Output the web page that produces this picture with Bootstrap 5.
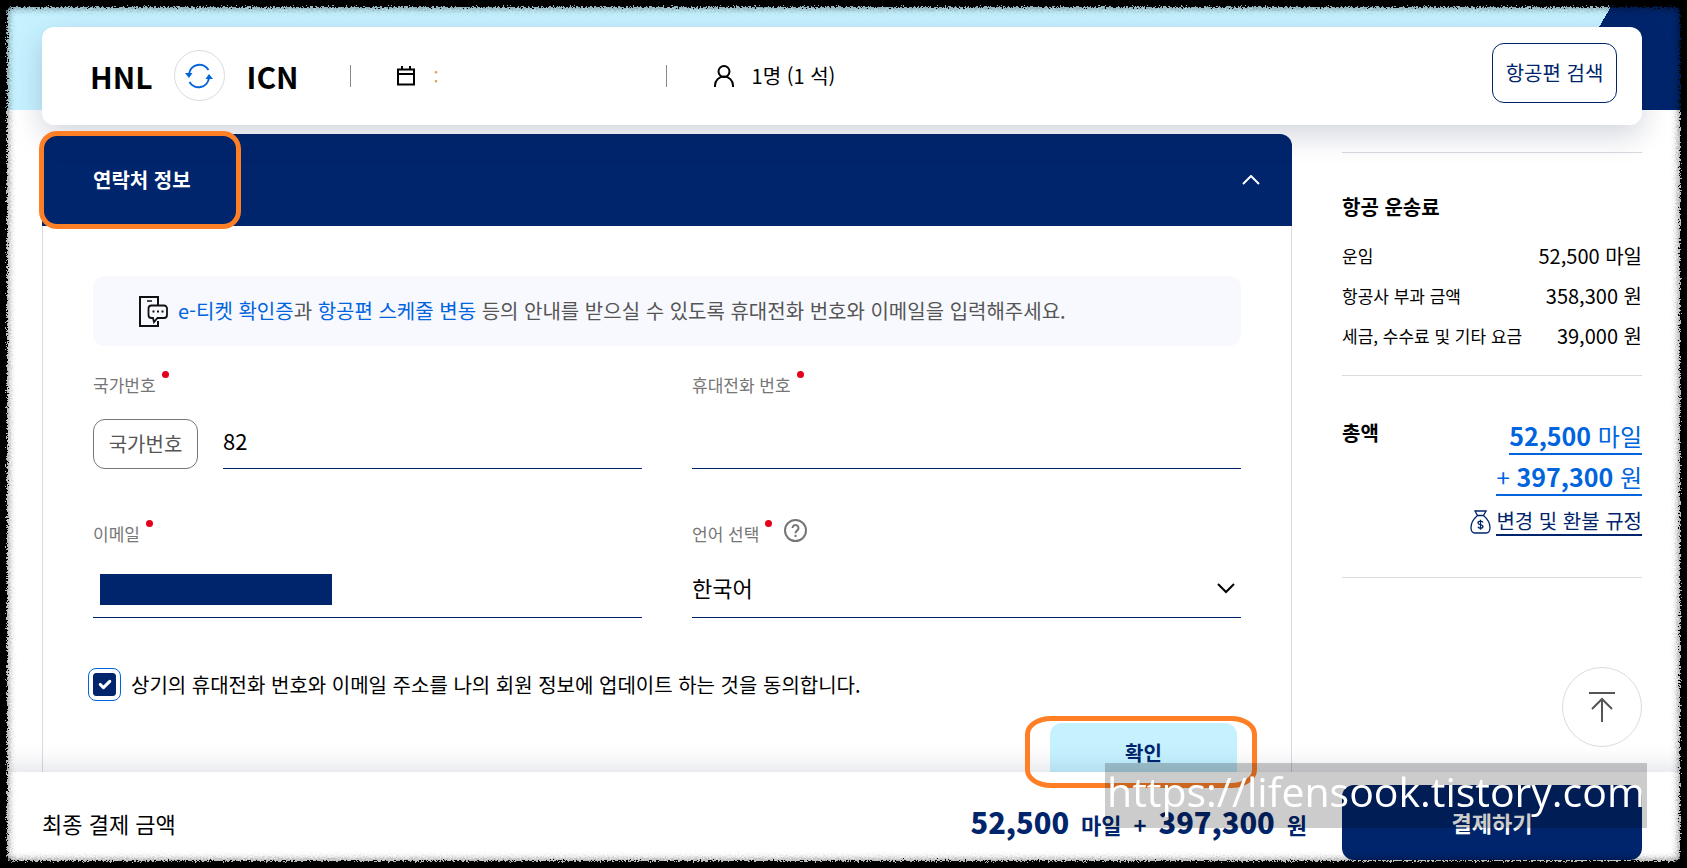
<!DOCTYPE html>
<html lang="ko">
<head>
<meta charset="utf-8">
<meta name="viewport" content="width=device-width, initial-scale=1">
<title>연락처 정보</title>
<link href="https://cdn.jsdelivr.net/npm/bootstrap@5.3.0/dist/css/bootstrap.min.css" rel="stylesheet">
<style>
:root{--navy:#00256c;--blue:#0064de;--sky:#c6f2ff;--line:#d9dbe1;--mark-orange:#ff7f27}
body{font-family:"Noto Sans CJK KR",sans-serif;font-size:20px;line-height:30px;color:#000;background:#fff}
svg{display:block;flex:none}
.side-pad{padding-left:42px;padding-right:45px}
.hero{padding-top:27px;padding-bottom:9px;z-index:1;
  background:linear-gradient(120deg,transparent 50%,var(--navy) 50%) right top/208px 110px no-repeat,linear-gradient(var(--sky),var(--sky)) 0 0/100% 110px no-repeat}
.trip{height:98px;border-radius:12px;padding:0 25px 1px 48px;box-shadow:0 10px 30px rgba(0,20,70,.18)}
.airport{font-size:30px;font-weight:700}
.swap{width:51px;height:51px;border:1px solid var(--line);border-radius:50%;background:#fff;color:var(--blue);margin:0 22px 0 21px}
.vbar{width:1px;height:22px;background:#8a8a8a}
.airport + .vbar{margin-left:51px}
.trip-date{width:315px;padding-left:45px;gap:18px}
.trip-pax{padding-left:47px;gap:18px}
.date-rest{color:#e0a050;font-size:18px}
.btn-search{height:60px;width:125px;border:1px solid var(--navy);border-radius:12px;color:var(--navy);font-size:20px;margin-bottom:5px}
.content{gap:50px;min-height:0}
.panel-head{height:92px;flex:none;border-radius:12px 12px 0 0;background:var(--navy);color:#fff;padding:0 32px 0 51px}
.panel-head h2,.fare h2{font-size:20px;line-height:30px;font-weight:700}
.panel-body{border:solid var(--line);border-width:0 1px;padding:50px 50px 0}
.ring{position:absolute;border:5px solid var(--mark-orange);pointer-events:none;z-index:3}
.ring-title{left:-3px;top:-3px;width:202px;height:98px;border-radius:18px}
.ring-ok{left:-25px;right:-20px;top:-7px;height:72px;border-radius:26px/18px}
.notice{height:70px;border-radius:12px;background:#f8f9fe;color:#555;padding-left:46px;gap:10px}
.notice a{color:var(--blue);text-decoration:none}
.fields{--bs-gutter-x:50px;row-gap:50px;margin-top:24px}
.label-row{font-size:17px;line-height:30px;color:#767676;height:30px;margin-bottom:19px}
.req::after{content:"";display:inline-block;width:7px;height:7px;border-radius:50%;background:#e4001b;margin-left:6px;vertical-align:14px}
.line-ctl{height:50px;width:100%;border:0;border-bottom:1px solid var(--navy);border-radius:0;background:none;padding:0 0 7px;font-size:22px;color:#000;appearance:none;outline-offset:4px}
select.line-ctl{padding-bottom:12px}
.code-row{gap:25px}
.btn-code{width:105px;height:50px;flex:none;border:1px solid #767676;border-radius:12px;color:#555;font-size:20px;padding:0}
.redact{position:absolute;left:7px;top:6px;width:232px;height:31px;background:var(--navy)}
.caret{position:absolute;right:6px;top:14px;pointer-events:none}
.agree{height:33px;margin-top:50px;gap:15px}
.agree .form-check-input{width:23px;height:23px;margin:0;border-radius:3px;background-color:var(--navy);border-color:var(--navy);outline:1px solid var(--blue);outline-offset:4px;box-shadow:none}
.ok-wrap{width:187px;margin:22px 4px 0 auto}
.btn-ok{height:60px;border-radius:12px;background:var(--sky);color:var(--navy);font-weight:700;font-size:20px}
.fare{width:300px;flex:none;padding-top:18px}
.fare hr{margin:0;border-top:1px solid var(--line);opacity:1}
.fare .fare-title{margin:39px 0 14px}
.fare table{width:100%;margin-bottom:19px}
.fare th{font-size:17px;font-weight:400;padding:0;height:40px}
.fare td{padding:0;text-align:right}
.total{padding:42px 0 41px}
.sum{color:var(--blue);font-size:24px;line-height:34px;border-bottom:2px solid var(--blue);text-decoration:none;margin-bottom:4px}
.sum b{font-size:25px}
.rule-link{color:var(--navy);text-decoration:none;gap:5px;margin-top:8px}
.rule-link span{border-bottom:2px solid var(--navy);line-height:26px}
.paybar{z-index:2;padding-top:13px;padding-bottom:8px;height:96px;box-shadow:0 -4px 24px rgba(0,30,70,.14);gap:35px}
.pay-label{font-size:22px}
.pay-total{color:var(--navy);font-size:22px;font-weight:700;gap:12px}
.pay-total b{font-size:29px}
.btn-pay{width:300px;height:75px;border-radius:12px;background:var(--navy);color:#fff;font-weight:700;font-size:22px}
.to-top{position:fixed;right:45px;bottom:121px;width:80px;height:80px;border:1px solid var(--line);border-radius:50%;background:#fff;color:#555;z-index:2}
.stamp{position:fixed;right:40px;bottom:40px;width:542px;height:65px;background:rgba(0,0,0,.2);color:#fff;font:41px/56px "Open Sans",sans-serif;text-align:center;white-space:nowrap;z-index:4;pointer-events:none}
.edge{position:fixed;inset:-20px;border:27px solid #000;pointer-events:none;z-index:5;filter:url(#rough)}
.edge i{position:absolute;inset:-6px;border:6px solid #000;border-radius:12px;box-shadow:inset 0 0 7px 1px rgba(0,0,0,.5)}
</style>
</head>
<body class="vh-100 d-flex flex-column">

<header class="hero side-pad position-relative">
  <div class="trip bg-white d-flex align-items-center">
    <span class="airport">HNL</span>
    <button class="swap btn p-0 d-flex align-items-center justify-content-center" type="button" aria-label="출발지 도착지 교환">
      <svg width="28" height="28" viewBox="0 0 28 28" fill="none" stroke="currentColor" stroke-width="2"><path d="M4 12A10.500 10.500 0 0 1 23.500 8M24 16A10.500 10.500 0 0 1 4.500 20"/><path d="M0 11h7.500L4 16zM20.500 17H28l-4-5z" fill="currentColor" stroke="none"/></svg>
    </button>
    <span class="airport">ICN</span>
    <span class="vbar"></span>
    <div class="trip-date d-flex align-items-center">
      <svg width="20" height="20" viewBox="0 0 20 20" fill="none" stroke="#000" stroke-width="2"><path d="M2 3.500h16v15H2zM2 8h16M6 0v4M14 0v4"/></svg>
      <span class="date-rest">:</span>
    </div>
    <span class="vbar"></span>
    <div class="trip-pax d-flex align-items-center">
      <svg width="20" height="22" viewBox="0 0 20 22" fill="none" stroke="#000" stroke-width="2"><circle cx="10" cy="6.500" r="5.500"/><path d="M1 22v-1.500a9 9 0 0 1 18 0V22"/></svg>
      <span>1명 (1 석)</span>
    </div>
    <button class="btn btn-search ms-auto p-0" type="button">항공편 검색</button>
  </div>
</header>

<main class="content side-pad d-flex flex-grow-1">
  <section class="flex-grow-1 d-flex flex-column">
    <div class="panel-head position-relative d-flex align-items-center justify-content-between">
      <h2 class="m-0">연락처 정보</h2>
      <span class="ring ring-title"></span>
      <svg width="18" height="10" viewBox="0 0 18 10" fill="none" stroke="#fff" stroke-width="2"><path d="M1 9l8-8 8 8"/></svg>
    </div>
    <div class="panel-body flex-grow-1">
      <div class="notice d-flex align-items-center">
        <svg width="29" height="31" viewBox="0 0 29 31" fill="none" stroke="#111" stroke-width="2"><path d="M19 9V1H1v29h18v-5"/><path d="M8 5h5" stroke-width="1.500"/><path d="M12.500 9.500H25a3 3 0 0 1 3 3V19a3 3 0 0 1-3 3h-6.500l-3.500 4-1-4h-1.500a3 3 0 0 1-3-3v-6.500a3 3 0 0 1 3-3z" fill="#f8f9fe" stroke-width="1.800"/><path d="M13.500 15.500h2m2.500 0h2m2.500 0h2"/></svg>
        <p class="m-0"><a href="#">e-티켓 확인증</a>과 <a href="#">항공편 스케줄 변동</a> 등의 안내를 받으실 수 있도록 휴대전화 번호와 이메일을 입력해주세요.</p>
      </div>
      <form>
        <div class="fields row">
          <div class="col-6">
            <div class="label-row"><label class="req" for="code">국가번호</label></div>
            <div class="code-row d-flex">
              <button class="btn btn-code" type="button">국가번호</button>
              <input class="line-ctl" id="code" type="text" value="82">
            </div>
          </div>
          <div class="col-6">
            <div class="label-row"><label class="req" for="phone">휴대전화 번호</label></div>
            <input class="line-ctl d-block" id="phone" type="tel">
          </div>
          <div class="col-6">
            <div class="label-row"><label class="req" for="email">이메일</label></div>
            <div class="position-relative">
              <input class="line-ctl d-block" id="email" type="email">
              <span class="redact"></span>
            </div>
          </div>
          <div class="col-6">
            <div class="label-row d-flex gap-2">
              <label class="req" for="lang">언어 선택</label>
              <svg class="ms-1" width="23" height="23" viewBox="0 0 23 23" fill="none" stroke="#767676" stroke-width="2"><circle cx="11.500" cy="11.500" r="10.500"/><path d="M8.500 9a3 3 0 1 1 4.800 2.400c-1.200.9-1.800 1.400-1.800 2.800M11.500 15.800v2.200"/></svg>
            </div>
            <div class="position-relative">
              <select class="line-ctl d-block" id="lang"><option>한국어</option></select>
              <svg class="caret" width="18" height="12" viewBox="0 0 18 12" fill="none" stroke="#000" stroke-width="2"><path d="M1 2l8 8 8-8"/></svg>
            </div>
          </div>
        </div>
        <div class="agree d-flex align-items-center">
          <input class="form-check-input" id="agree" type="checkbox" checked>
          <label for="agree">상기의 휴대전화 번호와 이메일 주소를 나의 회원 정보에 업데이트 하는 것을 동의합니다.</label>
        </div>
        <div class="ok-wrap position-relative">
          <button class="btn btn-ok w-100 p-0" type="button">확인</button>
          <span class="ring ring-ok"></span>
        </div>
      </form>
    </div>
  </section>

  <aside class="fare">
    <hr>
    <h2 class="fare-title">항공 운송료</h2>
    <table>
      <tr><th scope="row">운임</th><td>52,500 마일</td></tr>
      <tr><th scope="row">항공사 부과 금액</th><td>358,300 원</td></tr>
      <tr><th scope="row">세금, 수수료 및 기타 요금</th><td>39,000 원</td></tr>
    </table>
    <hr>
    <div class="total d-flex justify-content-between">
      <h2 class="m-0">총액</h2>
      <div class="d-flex flex-column align-items-end">
        <a class="sum" href="#"><b>52,500</b> 마일</a>
        <a class="sum" href="#">+ <b>397,300</b> 원</a>
        <a class="rule-link d-flex align-items-center" href="#">
          <svg width="21" height="24" viewBox="0 0 21 24" fill="none" stroke="currentColor" stroke-width="1.300"><path d="M5 1h11l-2.500 4.500h-6zM7.500 5.500C4 8.500 1 12.500 1 17.500c0 4 1.500 5.500 4 5.500h11c2.500 0 4-1.500 4-5.500 0-5-3-9-6.500-12"/><path d="M13 12.500c-.5-1-1.300-1.300-2.500-1.300-1.500 0-2.500.6-2.500 1.700 0 2.600 5 1 5 3.600 0 1.100-1 1.800-2.500 1.800-1.300 0-2.200-.5-2.600-1.500M10.500 9.800v10"/></svg>
          <span>변경 및 환불 규정</span>
        </a>
      </div>
    </div>
    <hr>
  </aside>
</main>

<footer class="paybar side-pad position-relative bg-white d-flex align-items-center">
  <span class="pay-label me-auto">최종 결제 금액</span>
  <div class="pay-total d-flex align-items-baseline"><b>52,500</b><span>마일</span><span>+</span><b>397,300</b><span>원</span></div>
  <button class="btn btn-pay p-0" type="button">결제하기</button>
</footer>

<button class="to-top btn p-0 d-flex align-items-center justify-content-center" type="button" aria-label="맨 위로">
  <svg width="26" height="32" viewBox="0 0 26 32" fill="none" stroke="currentColor" stroke-width="2"><path d="M0 2h26M13 31V8M3 18L13 8l10 10"/></svg>
</button>

<div class="stamp">https://lifensook.tistory.com</div>

<!-- torn black border round the page -->
<svg width="0" height="0" class="position-absolute"><filter id="rough" x="0" y="0" width="100%" height="100%"><feTurbulence type="fractalNoise" baseFrequency="0.6" numOctaves="2" seed="4"/><feDisplacementMap in="SourceGraphic" scale="7" xChannelSelector="R" yChannelSelector="G"/></filter></svg>
<div class="edge"><i></i></div>

<script src="https://cdn.jsdelivr.net/npm/bootstrap@5.3.0/dist/js/bootstrap.bundle.min.js"></script>
</body>
</html>
